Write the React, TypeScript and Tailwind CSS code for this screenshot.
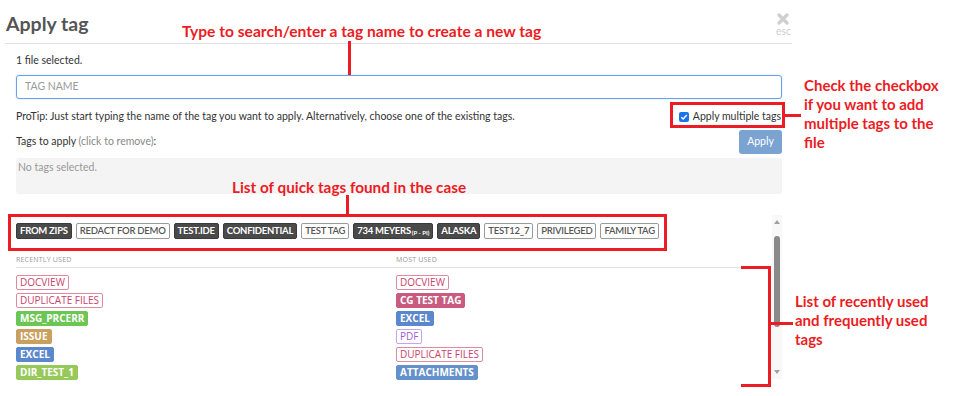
import React from 'react';

type Tag = { name: string; style: string; sub?: string };

const quickTags: Tag[] = [
    { name: 'FROM ZIPS', style: 'dark' },
    { name: 'REDACT FOR DEMO', style: 'light' },
    { name: 'TEST.IDE', style: 'dark' },
    { name: 'CONFIDENTIAL', style: 'dark' },
    { name: 'TEST TAG', style: 'light' },
    { name: '734 MEYERS', style: 'dark', sub: '(P - PI)' },
    { name: 'ALASKA', style: 'dark' },
    { name: 'TEST12_7', style: 'light' },
    { name: 'PRIVILEGED', style: 'light' },
    { name: 'FAMILY TAG', style: 'light' },
];

const recent: Tag[] = [
    { name: 'DOCVIEW', style: 'pinkOutline' },
    { name: 'DUPLICATE FILES', style: 'pinkOutline' },
    { name: 'MSG_PRCERR', style: 'green' },
    { name: 'ISSUE', style: 'tan' },
    { name: 'EXCEL', style: 'blue' },
    { name: 'DIR_TEST_1', style: 'lime' },
];

const most: Tag[] = [
    { name: 'DOCVIEW', style: 'pinkOutline' },
    { name: 'CG TEST TAG', style: 'pink' },
    { name: 'EXCEL', style: 'blue' },
    { name: 'PDF', style: 'purpleOutline' },
    { name: 'DUPLICATE FILES', style: 'pinkOutline' },
    { name: 'ATTACHMENTS', style: 'steel' },
];

const styles: Record<string, string> = {
    dark: 'bg-[#4a4a4a] border-[#3a3a3a] text-white font-bold',
    light: 'bg-white border-[#9a9a9a] text-[#555] font-semibold',
    pinkOutline: 'bg-white border-[#e08aa2] text-[#c9436e] font-normal',
    purpleOutline: 'bg-white border-[#c3a6ec] text-[#9a5fd8] font-normal',
    pink: 'bg-[#c95a80] border-[#c95a80] text-white font-bold',
    green: 'bg-[#6cc653] border-[#6cc653] text-white font-bold',
    tan: 'bg-[#c9a05e] border-[#c9a05e] text-white font-bold',
    blue: 'bg-[#5b87cc] border-[#5b87cc] text-white font-bold',
    lime: 'bg-[#96c95a] border-[#96c95a] text-white font-bold',
    steel: 'bg-[#6491cc] border-[#6491cc] text-white font-bold',
};

function QuickTag({ tag }: { tag: Tag }) {
    return (
        <span
            className={`inline-flex items-center h-[16px] px-[3px] border rounded-[2px] text-[9.5px] tracking-[-0.25px] leading-none ${styles[tag.style]}`}
        >
            {tag.name}
            {tag.sub && <span className="text-[6px] tracking-normal ml-[1px] mt-[3px]">{tag.sub}</span>}
        </span>
    );
}

function ListTag({ tag }: { tag: Tag }) {
    return (
        <span
            className={`inline-flex items-center h-[15px] px-[3px] border rounded-[2px] text-[10px] leading-none font-['Open_Sans',sans-serif] ${styles[tag.style]}`}
        >
            {tag.name}
        </span>
    );
}

const note = "font-['Lato',sans-serif] font-bold text-[#ec1c24]";

export default function App() {
    return (
        <div className="relative w-[958px] h-[396px] bg-white overflow-hidden font-['Lato','Open_Sans',sans-serif] text-[#333]">
            <div className="w-[792px]">
                {/* header */}
                <div className="ml-[5px] h-[44px] border-b-[1.5px] border-[#e3e3e3] flex items-start justify-between">
                    <h1 className="mt-[10px] ml-[1px] text-[19.5px] font-bold text-[#555] leading-[28px]">
                        Apply tag
                    </h1>
                    <div className="mt-[13px] mr-[1px] flex flex-col items-center text-[#cfcfcf]">
                        <svg width="12" height="12" viewBox="0 0 12 12">
                            <path d="M2 2 L10 10 M10 2 L2 10" stroke="#cfcfcf" strokeWidth="3.2" strokeLinecap="round" />
                        </svg>
                        <span className="text-[10.5px] leading-[10px] mt-[1px]">esc</span>
                    </div>
                </div>

                <div className="pl-[16px] pr-[10px] text-[10.5px]">
                    <div className="mt-[9px] leading-[15px]">1 file selected.</div>
                    <div className="mt-[7px] h-[24px] border border-[#66a3e8] rounded-[3px] flex items-center pl-[8px] text-[#9a9a9a] shadow-[0_0_2px_rgba(102,163,232,0.4)]">
                        TAG NAME
                    </div>
                    <div className="mt-[10px] flex items-center justify-between leading-[15px]">
                        <span>ProTip: Just start typing the name of the tag you want to apply. Alternatively, choose one of the existing tags.</span>
                        <label className="flex items-center gap-[4px] mr-[1px]">
                            <span className="w-[10px] h-[10px] rounded-[2px] bg-[#1a73e8] flex items-center justify-center">
                                <svg width="8" height="8" viewBox="0 0 8 8">
                                    <path d="M1.3 4.2 L3.2 6 L6.8 2" stroke="white" strokeWidth="1.4" fill="none" />
                                </svg>
                            </span>
                            Apply multiple tags
                        </label>
                    </div>
                    <div className="mt-[6px] flex items-center justify-between">
                        <span>
                            Tags to apply <span className="text-[#888]">(click to remove)</span>:
                        </span>
                        <span className="h-[24px] w-[43px] rounded-[3px] bg-[#7aa3d2] text-white flex items-center justify-center">Apply</span>
                    </div>
                    <div className="mt-[4px] h-[36px] bg-[#f4f4f4] rounded-[3px] pl-[2px] pt-[2px] text-[#999]">No tags selected.</div>
                </div>

                <div className="mt-[21px] flex">
                    <div className="flex-1 pl-[16px] pr-[5px]">
                        <div className="mt-[8px] flex gap-[4px]">
                            {quickTags.map((t) => (
                                <QuickTag key={t.name} tag={t} />
                            ))}
                        </div>
                        <div className="mt-[16px] grid grid-cols-[380px_1fr] border-b-[1.5px] border-[#e3e3e3] pb-[1px] text-[7px] text-[#999] tracking-[0.2px] font-['Open_Sans',sans-serif]">
                            <span>RECENTLY USED</span>
                            <span>MOST USED</span>
                        </div>
                        <div className="mt-[7px] grid grid-cols-[380px_1fr]">
                            <div className="flex flex-col items-start gap-[3px]">
                                {recent.map((t) => (
                                    <ListTag key={t.name} tag={t} />
                                ))}
                            </div>
                            <div className="flex flex-col items-start gap-[3px]">
                                {most.map((t) => (
                                    <ListTag key={t.name} tag={t} />
                                ))}
                            </div>
                        </div>
                    </div>
                    <div className="w-[10px] h-[164px] mr-[10px] bg-[#f8f8f8] flex flex-col items-center">
                        <svg width="6" height="4" viewBox="0 0 6 4" className="mt-[5px]">
                            <path d="M0 4 L3 0 L6 4 Z" fill="#a0a0a0" />
                        </svg>
                        <div className="mt-[12px] w-[6px] h-[91px] rounded-[3px] bg-[#8a8a8a]" />
                        <svg width="6" height="4" viewBox="0 0 6 4" className="mt-auto mb-[5px]">
                            <path d="M0 0 L6 0 L3 4 Z" fill="#a0a0a0" />
                        </svg>
                    </div>
                </div>
            </div>

            {/* annotations */}
            <div className={`absolute left-[182px] top-[22px] text-[15.6px] leading-[18px] ${note}`}>
                Type to search/enter a tag name to create a new tag
            </div>
            <div className="absolute left-[348px] top-[41px] w-[3px] h-[34px] bg-[#ec1c24]" />

            <div className="absolute left-[670px] top-[102px] w-[115px] h-[26px] border-[3px] border-[#ec1c24]" />
            <div className="absolute left-[785px] top-[114px] w-[16px] h-[3px] bg-[#ec1c24]" />
            <div className={`absolute left-[804px] top-[76px] text-[15px] leading-[19px] ${note}`}>
                Check the checkbox
                <br />
                if you want to add
                <br />
                multiple tags to the
                <br />
                file
            </div>

            <div className={`absolute left-[232px] top-[178px] text-[15.3px] leading-[18px] ${note}`}>
                List of quick tags found in the case
            </div>
            <div className="absolute left-[346px] top-[195px] w-[3px] h-[19px] bg-[#ec1c24]" />
            <div className="absolute left-[8px] top-[214px] w-[659px] h-[37px] border-[3px] border-[#ec1c24]" />

            <div className="absolute left-[741px] top-[266px] w-[30px] h-[121px] border-[3px] border-l-0 border-[#ec1c24]" />
            <div className="absolute left-[770px] top-[322px] w-[23px] h-[3px] bg-[#ec1c24]" />
            <div className={`absolute left-[795px] top-[292px] text-[15px] leading-[19px] ${note}`}>
                List of recently used
                <br />
                and frequently used
                <br />
                tags
            </div>
        </div>
    );
}
